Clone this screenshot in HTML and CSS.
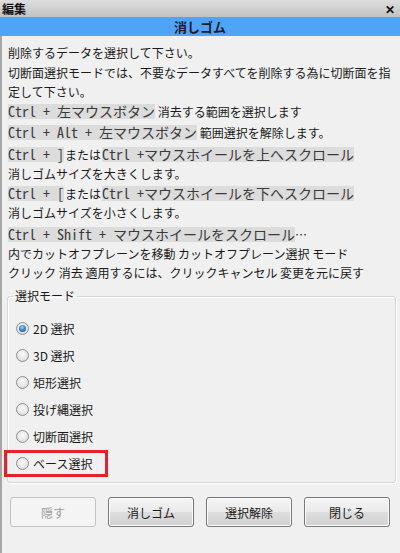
FILE: index.html
```html
<!DOCTYPE html>
<html lang="ja">
<head>
<meta charset="utf-8">
<link rel="stylesheet" href="styles.css">
</head>
<body>
<div class="window">
  <div class="titlebar">
    <span class="title">編集</span>
    <span class="close">✕</span>
  </div>
  <div class="header">消しゴム</div>
  <div class="content">
    <div class="help">
      <p class="p">削除するデータを選択して下さい。</p>
      <p class="p">切断面選択モードでは、不要なデータすべてを削除する為に切断面を指定して下さい。</p>
      <p class="p"><span class="code">Ctrl + 左マウスボタン</span> 消去する範囲を選択します</p>
      <p class="p gap"><span class="code">Ctrl + Alt + 左マウスボタン</span> 範囲選択を解除します。</p>
      <p class="p gap-lg"><span class="code">Ctrl + ]</span><span class="or">または</span><span class="code">Ctrl +マウスホイールを上へスクロール</span><br>消しゴムサイズを大きくします。</p>
      <p class="p"><span class="code">Ctrl + [</span><span class="or">または</span><span class="code">Ctrl +マウスホイールを下へスクロール</span><br>消しゴムサイズを小さくします。</p>
      <p class="p gap-lg"><span class="code">Ctrl + Shift + マウスホイールをスクロール</span>…<br>内でカットオフプレーンを移動 カットオフプレーン選択 モード<br>クリック 消去 適用するには、クリックキャンセル 変更を元に戻す</p>
    </div>
    <fieldset class="group">
      <legend class="legend">選択モード</legend>
      <div class="option"><span class="radio checked"></span><span>2D 選択</span></div>
      <div class="option"><span class="radio"></span><span>3D 選択</span></div>
      <div class="option"><span class="radio"></span><span>矩形選択</span></div>
      <div class="option"><span class="radio"></span><span>投げ縄選択</span></div>
      <div class="option"><span class="radio"></span><span>切断面選択</span></div>
      <div class="option marked"><span class="radio"></span><span>ベース選択</span></div>
    </fieldset>
    <div class="buttons">
      <button class="btn" disabled>隠す</button>
      <button class="btn">消しゴム</button>
      <button class="btn">選択解除</button>
      <button class="btn">閉じる</button>
    </div>
  </div>
</div>
</body>
</html>
```

FILE: styles.css
```css
html, body {
  margin: 0;
  padding: 0;
  background: #f0f0f0;
}
body {
  font-family: "Noto Sans CJK JP", "Noto Sans", sans-serif;
  font-size: 12px;
  color: #1a1a1a;
}
.window {
  width: 400px;
  height: 553px;
  display: flex;
  flex-direction: column;
  overflow: hidden;
}
.titlebar {
  height: 17px;
  background: linear-gradient(#dedede, #c2c2c2);
  display: flex;
  align-items: center;
  justify-content: space-between;
  padding: 0 5px 0 2px;
}
.title {
  font-weight: bold;
  font-size: 12px;
  line-height: 17px;
  color: #111;
}
.close {
  font-weight: bold;
  font-size: 12px;
  line-height: 17px;
  color: #111;
}
.header {
  height: 19px;
  background: #4fa4f8;
  text-align: center;
  font-weight: bold;
  font-size: 13px;
  line-height: 19px;
  color: #1c1c28;
}
.content {
  flex: 1;
  border-left: 2px solid #a6a6a6;
  display: flex;
  flex-direction: column;
}
.help {
  padding: 7px 6px 0 6px;
}
.p {
  margin: 1px 0 0 0;
  line-height: 19px;
}
.p:first-child {
  margin-top: 0;
}
.p.gap {
  margin-top: 2px;
}
.p.gap-lg {
  margin-top: 3px;
}
.code {
  display: inline-block;
  font-family: "Noto Sans Mono CJK JP", "DejaVu Sans Mono", "Noto Sans CJK JP", monospace;
  font-size: 14px;
  line-height: 15px;
  height: 15px;
  background: #dcdcdc;
  color: #3a3a3a;
  vertical-align: 0;
  white-space: nowrap;
}
.or {
  margin: 0 1px;
}
.group {
  margin: 7px 4px 0 5px;
  padding: 12px 0 5px 0;
  border: 1px solid #d6d6d6;
  border-radius: 3px;
  box-shadow: inset 1px 1px 0 #fff, 1px 1px 0 #fff;
  display: flex;
  flex-direction: column;
}
.legend {
  padding: 0 2px;
  margin-left: 5px;
  line-height: 14px;
}
.option {
  position: relative;
  height: 27px;
  display: flex;
  align-items: center;
  gap: 4px;
  padding-left: 8px;
}
.radio {
  width: 11px;
  height: 11px;
  border-radius: 50%;
  border: 1px solid #8f8f8f;
  background: radial-gradient(circle at 50% 40%, #fbfbfb 0%, #e6e6e6 55%, #cfcfcf 100%);
  display: flex;
  align-items: center;
  justify-content: center;
}
.radio.checked::after {
  content: "";
  width: 7px;
  height: 7px;
  border-radius: 50%;
  background: radial-gradient(circle at 45% 35%, #9fd2f8 0%, #3a8ad0 45%, #1b4f86 100%);
}
.option.marked::after {
  content: "";
  position: absolute;
  left: -4px;
  top: 0;
  width: 98px;
  height: 21px;
  border: 3px solid #e8202a;
}
.buttons {
  display: flex;
  gap: 12px;
  padding: 14px 0 0 8px;
}
.btn {
  width: 86px;
  height: 30px;
  margin: 0;
  padding: 0;
  font-family: "Noto Sans CJK JP", sans-serif;
  font-size: 12px;
  color: #1a1a1a;
  border: 1px solid #777;
  border-radius: 3px;
  background: linear-gradient(#f4f4f4 0%, #ebebeb 48%, #dddddd 52%, #d2d2d2 100%);
  box-shadow: inset 0 0 0 1px #fcfcfc;
}
.btn:disabled {
  color: #9d9d9d;
  border-color: #c2c2c2;
  background: #f4f4f4;
  box-shadow: none;
}
```
